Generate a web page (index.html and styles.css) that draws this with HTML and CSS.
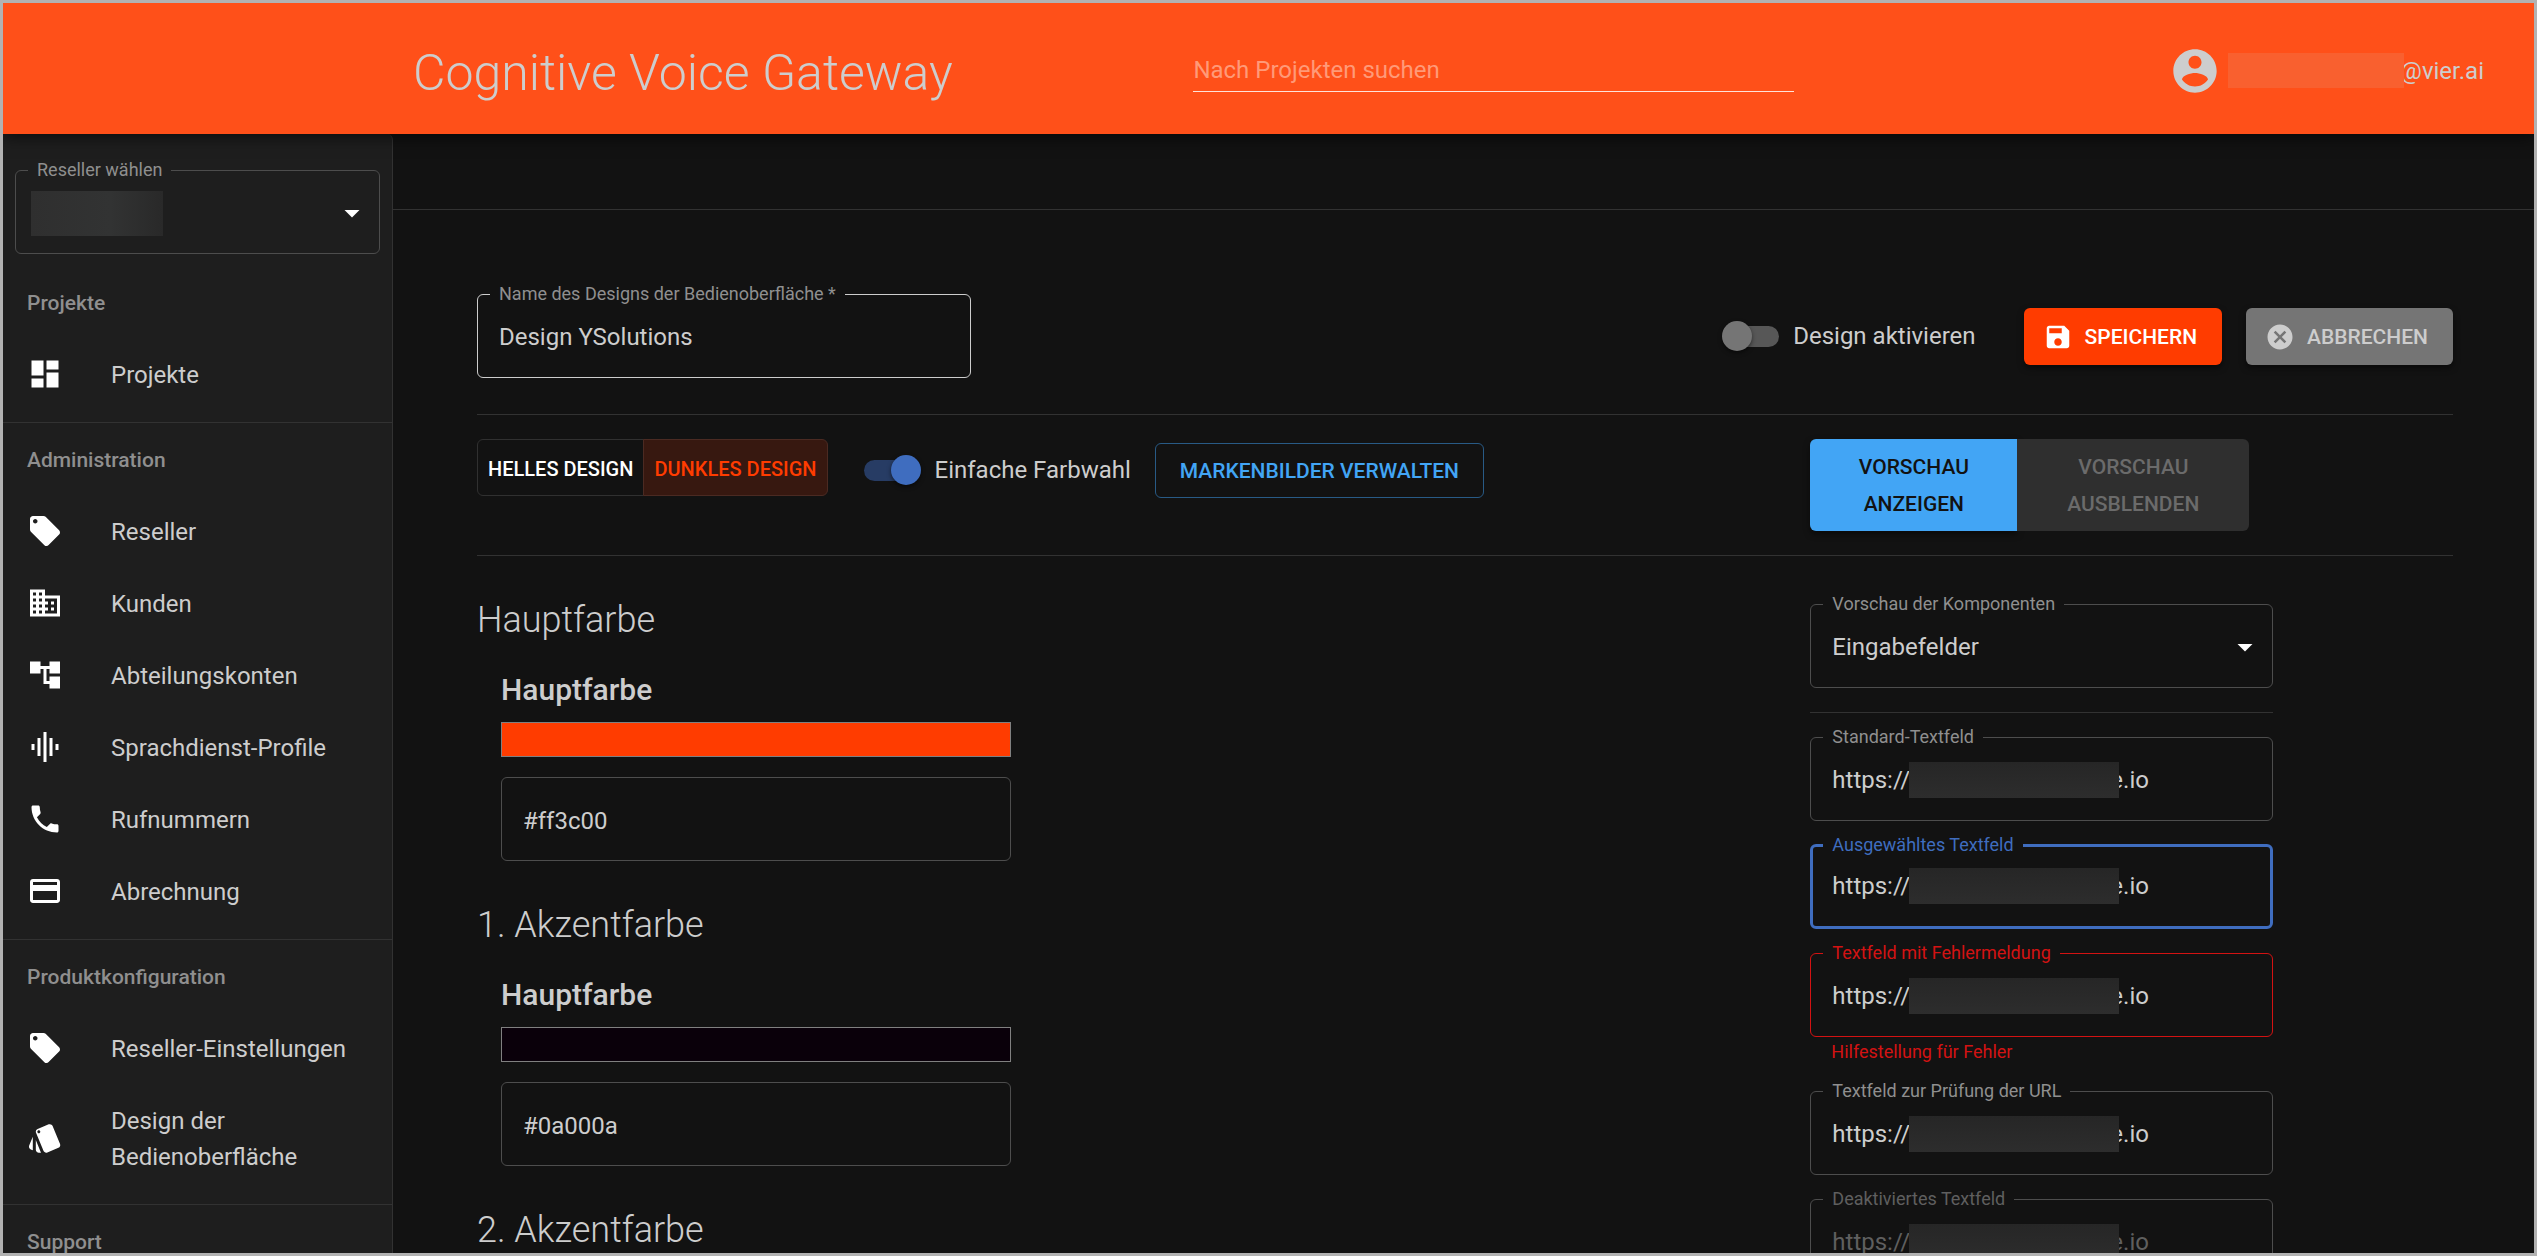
FILE: index.html
```html
<!DOCTYPE html>
<html lang="de">
<head>
<meta charset="utf-8">
<meta name="viewport" content="width=device-width, initial-scale=1">
<title>Cognitive Voice Gateway</title>
<link rel="stylesheet" href="styles.css">
</head>
<body>
<div class="app">
  <header class="topbar">
    <h1 class="topbar-title">Cognitive Voice Gateway</h1>
    <input class="search" type="search" placeholder="Nach Projekten suchen" aria-label="Nach Projekten suchen">
    <div class="user">
      <svg class="user-icon" viewBox="0 0 24 24"><path d="M12 2C6.48 2 2 6.48 2 12s4.48 10 10 10 10-4.48 10-10S17.52 2 12 2zm0 3c1.66 0 3 1.34 3 3s-1.34 3-3 3-3-1.34-3-3 1.34-3 3-3zm0 14.2c-2.500 0-4.710-1.280-6-3.220.03-1.990 4-3.080 6-3.080 1.990 0 5.970 1.090 6 3.080-1.290 1.940-3.500 3.220-6 3.220z"/></svg>
      <span class="redacted redacted-user"></span>
      <span class="user-domain">@vier.ai</span>
    </div>
  </header>

  <div class="body">
    <nav class="sidebar">
      <fieldset class="field field-reseller">
        <legend><label for="reseller">Reseller wählen</label></legend>
        <span class="redacted redacted-reseller"></span>
        <select id="reseller"><option></option></select>
        <svg class="icon" viewBox="0 0 24 24"><path d="M7 10l5 5 5-5z"/></svg>
      </fieldset>

      <section class="nav-section">
        <h2>Projekte</h2>
        <a href="#"><svg class="icon" viewBox="0 0 24 24"><path d="M3 13h8V3H3v10zm0 8h8v-6H3v6zm10 0h8V11h-8v10zm0-18v6h8V3h-8z"/></svg><span>Projekte</span></a>
      </section>
      <section class="nav-section">
        <h2>Administration</h2>
        <a href="#"><svg class="icon" viewBox="0 0 24 24"><path d="M21.410 11.580l-9-9C12.050 2.220 11.550 2 11 2H4c-1.100 0-2 .9-2 2v7c0 .55.22 1.050.59 1.420l9 9c.36.36.86.58 1.410.58.55 0 1.050-.22 1.410-.59l7-7c.37-.36.59-.86.59-1.410 0-.55-.23-1.060-.59-1.420zM5.500 7C4.670 7 4 6.330 4 5.500S4.670 4 5.500 4 7 4.670 7 5.500 6.330 7 5.500 7z"/></svg><span>Reseller</span></a>
        <a href="#"><svg class="icon" viewBox="0 0 24 24"><path d="M12 7V3H2v18h20V7H12zM6 19H4v-2h2v2zm0-4H4v-2h2v2zm0-4H4V9h2v2zm0-4H4V5h2v2zm4 12H8v-2h2v2zm0-4H8v-2h2v2zm0-4H8V9h2v2zm0-4H8V5h2v2zm10 12h-8v-2h2v-2h-2v-2h2v-2h-2V9h8v10zm-2-8h-2v2h2v-2zm0 4h-2v2h2v-2z"/></svg><span>Kunden</span></a>
        <a href="#"><svg class="icon" viewBox="0 0 24 24"><path d="M22 11V3h-7v3H9V3H2v8h7V8h2v10h4v3h7v-8h-7v3h-2V8h2v3z"/></svg><span>Abteilungskonten</span></a>
        <a href="#"><svg class="icon" viewBox="0 0 24 24"><path d="M7 18h2V6H7v12zm4 4h2V2h-2v20zm-8-8h2v-4H3v4zm12 4h2V6h-2v12zm4-8v4h2v-4h-2z"/></svg><span>Sprachdienst-Profile</span></a>
        <a href="#"><svg class="icon" viewBox="0 0 24 24"><path d="M6.620 10.790c1.440 2.830 3.760 5.140 6.590 6.590l2.200-2.200c.27-.27.67-.36 1.020-.24 1.120.37 2.330.57 3.570.57.55 0 1 .45 1 1V20c0 .55-.45 1-1 1-9.390 0-17-7.610-17-17 0-.55.45-1 1-1h3.500c.55 0 1 .45 1 1 0 1.250.2 2.450.57 3.570.11.35.03.74-.25 1.020l-2.200 2.200z"/></svg><span>Rufnummern</span></a>
        <a href="#"><svg class="icon" viewBox="0 0 24 24"><path d="M20 4H4c-1.110 0-1.990.89-1.990 2L2 18c0 1.110.89 2 2 2h16c1.110 0 2-.89 2-2V6c0-1.110-.89-2-2-2zm0 14H4v-6h16v6zm0-10H4V6h16v2z"/></svg><span>Abrechnung</span></a>
      </section>
      <section class="nav-section">
        <h2>Produktkonfiguration</h2>
        <a href="#"><svg class="icon" viewBox="0 0 24 24"><path d="M21.410 11.580l-9-9C12.050 2.220 11.550 2 11 2H4c-1.100 0-2 .9-2 2v7c0 .55.22 1.050.59 1.420l9 9c.36.36.86.58 1.410.58.55 0 1.050-.22 1.410-.59l7-7c.37-.36.59-.86.59-1.410 0-.55-.23-1.060-.59-1.420zM5.500 7C4.670 7 4 6.330 4 5.500S4.670 4 5.500 4 7 4.670 7 5.500 6.330 7 5.500 7z"/></svg><span>Reseller-Einstellungen</span></a>
        <a href="#"><svg class="icon" viewBox="0 0 24 24"><path d="M2.530 19.650l1.340.56v-9.030l-2.430 5.860c-.41 1.020.08 2.190 1.090 2.610zm19.500-3.700L17.070 3.980c-.31-.75-1.040-1.210-1.810-1.230-.26 0-.53.04-.79.15L7.100 5.950c-.75.31-1.210 1.030-1.230 1.800-.01.27.04.54.15.8l4.960 11.970c.31.76 1.050 1.220 1.830 1.230.26 0 .52-.05.77-.15l7.360-3.050c1.020-.42 1.510-1.590 1.090-2.600zM7.880 8.750c-.55 0-1-.45-1-1s.45-1 1-1 1 .45 1 1-.45 1-1 1zm-2 11c0 1.100.9 2 2 2h1.450l-3.450-8.340v6.340z"/></svg><span>Design der Bedienoberfläche</span></a>
      </section>
      <section class="nav-section">
        <h2>Support</h2>
      </section>
    </nav>

    <main class="main">
      <div class="crumb-strip"></div>
      <div class="content">
        <div class="row row-name">
          <fieldset class="field field-name">
            <legend><label for="design-name">Name des Designs der Bedienoberfläche *</label></legend>
            <input id="design-name" type="text" value="Design YSolutions">
          </fieldset>
          <div class="actions">
            <label class="switch-label switch-activate"><input class="switch" type="checkbox">Design aktivieren</label>
            <button class="btn btn-save" type="button"><svg viewBox="0 0 24 24"><path d="M17 3H5c-1.110 0-2 .9-2 2v14c0 1.100.89 2 2 2h14c1.100 0 2-.9 2-2V7l-4-4zm-5 16c-1.660 0-3-1.340-3-3s1.340-3 3-3 3 1.340 3 3-1.340 3-3 3zm3-10H5V5h10v4z"/></svg>SPEICHERN</button>
            <button class="btn btn-cancel" type="button"><svg viewBox="0 0 24 24"><path d="M12 2C6.470 2 2 6.470 2 12s4.470 10 10 10 10-4.470 10-10S17.530 2 12 2zm5 13.590L15.590 17 12 13.410 8.410 17 7 15.590 10.590 12 7 8.410 8.410 7 12 10.590 15.590 7 17 8.410 13.410 12 17 15.590z"/></svg>ABBRECHEN</button>
          </div>
        </div>

        <div class="row columns row-options">
          <div class="options">
            <div class="mode-toggle">
              <button type="button">HELLES DESIGN</button>
              <button class="active" type="button" aria-pressed="true">DUNKLES DESIGN</button>
            </div>
            <label class="switch-label"><input class="switch" type="checkbox" checked>Einfache Farbwahl</label>
            <button class="btn btn-outline" type="button">MARKENBILDER VERWALTEN</button>
          </div>
          <div class="preview-toggle">
            <button class="btn btn-show" type="button">VORSCHAU<br>ANZEIGEN</button>
            <button class="btn btn-hide" type="button" disabled>VORSCHAU<br>AUSBLENDEN</button>
          </div>
        </div>

        <div class="columns">
          <div class="colors">
            <section class="color-group">
              <h2>Hauptfarbe</h2>
              <div class="color">
                <h3><label for="c0">Hauptfarbe</label></h3>
                <div class="swatch" style="background:#ff3c00"></div>
                <div class="field plain"><input id="c0" type="text" value="#ff3c00"></div>
              </div>
            </section>
            <section class="color-group">
              <h2>1. Akzentfarbe</h2>
              <div class="color">
                <h3><label for="c1">Hauptfarbe</label></h3>
                <div class="swatch" style="background:#0a000a"></div>
                <div class="field plain"><input id="c1" type="text" value="#0a000a"></div>
              </div>
            </section>
            <section class="color-group">
              <h2>2. Akzentfarbe</h2>
            </section>
          </div>

          <div class="preview">
            <fieldset class="field">
              <legend><label for="component">Vorschau der Komponenten</label></legend>
              <select id="component"><option>Eingabefelder</option></select>
              <svg class="icon" viewBox="0 0 24 24"><path d="M7 10l5 5 5-5z"/></svg>
            </fieldset>
            <hr>
            <fieldset class="field">
              <legend><label for="f1">Standard-Textfeld</label></legend>
              <input id="f1" class="url" type="text" value="https://"><span class="redacted redacted-url"></span><span class="suffix">e.io</span>
            </fieldset>
            <fieldset class="field focused">
              <legend><label for="f2">Ausgewähltes Textfeld</label></legend>
              <input id="f2" class="url" type="text" value="https://"><span class="redacted redacted-url"></span><span class="suffix">e.io</span>
            </fieldset>
            <fieldset class="field error">
              <legend><label for="f3">Textfeld mit Fehlermeldung</label></legend>
              <input id="f3" class="url" type="text" value="https://" aria-describedby="f3-help"><span class="redacted redacted-url"></span><span class="suffix">e.io</span>
            </fieldset>
            <p id="f3-help" class="help">Hilfestellung für Fehler</p>
            <fieldset class="field">
              <legend><label for="f4">Textfeld zur Prüfung der URL</label></legend>
              <input id="f4" class="url" type="text" value="https://"><span class="redacted redacted-url"></span><span class="suffix">e.io</span>
            </fieldset>
            <fieldset class="field disabled" disabled>
              <legend><label for="f5">Deaktiviertes Textfeld</label></legend>
              <input id="f5" class="url" type="text" value="https://"><span class="redacted redacted-url"></span><span class="suffix">e.io</span>
            </fieldset>
          </div>
        </div>
      </div>
    </main>
  </div>
</div>
</body>
</html>
```
FILE: styles.css
```css
* { box-sizing: border-box; }

:root {
  --bg: #121212;
  --panel: #1e1e1e;
  --line: #323232;
  --text: #cdcdcd;
  --muted: #8f8f8f;
  --orange: #ff3c00;
  --blue: #3f6dbf;
  --sky: #42a5f5;
}

body {
  margin: 0;
  color: var(--text);
  background: var(--bg);
  font: 400 24px/36px Roboto, "Liberation Sans", sans-serif;
}

h1, h2, h3, p { margin: 0; font-weight: 400; }
a { color: inherit; text-decoration: none; }
button, input, select { font: inherit; color: inherit; }
svg { fill: currentColor; flex: none; }

.app {
  display: flex;
  flex-direction: column;
  height: 100vh;
  border: 3px solid #b2b2b2;
  overflow: hidden;
}

/* Top bar */
.topbar {
  display: grid;
  grid-template-columns: minmax(0, 26fr) minmax(0, 20fr) minmax(0, 23fr);
  align-items: center;
  flex: none;
  height: 131px;
  padding: 0 50px 0 410px;
  background: #ff5019;
  box-shadow: 0 3px 15px rgba(0, 0, 0, .6);
  position: relative;
  z-index: 1;
}
.topbar-title { font-size: 50px; line-height: 60px; font-weight: 300; padding-top: 8px; }
.search {
  width: 100%;
  height: 46px;
  padding: 4px 0 0;
  border: 0;
  border-bottom: 1px solid #ffe3da;
  border-radius: 0;
  background: none;
  outline: 0;
  appearance: none;
}
.search::placeholder { color: #ff9a78; opacity: 1; }
.user { display: flex; justify-content: flex-end; align-items: center; padding-top: 4px; }
.user-icon { width: 52px; height: 52px; margin-right: 7px; }

/* Blacked-out values */
.redacted { flex: none; background: #2a2a2a; position: relative; z-index: 1; }
.redacted-user { width: 176px; height: 35px; margin-right: -4px; background: #f9602f; }
.redacted-reseller { width: 132px; height: 45px; background: linear-gradient(90deg, #2f2f2f, #323333 60%, #292929); }
.redacted-url { width: 210px; height: 36px; margin-right: -9px; background: linear-gradient(#262626, #2d2d2d); }

/* Shell */
.body { display: flex; flex: 1; min-height: 0; }
.sidebar {
  flex: none;
  width: 390px;
  padding-top: 36px;
  background: var(--panel);
  border-right: 1px solid var(--line);
  border-top-right-radius: 6px;
  overflow: hidden;
}
.main { flex: 1; min-width: 0; overflow: hidden; }
.crumb-strip { height: 76px; border-bottom: 1px solid var(--line); }
.content { padding: 84px 81px 0 84px; }
.icon { width: 36px; height: 36px; color: #fff; }

/* Navigation */
.nav-section { padding-bottom: 12px; border-bottom: 1px solid var(--line); }
.nav-section h2 {
  padding: 2px 24px 0;
  font-size: 21px;
  line-height: 70px;
  font-weight: 500;
  color: var(--muted);
}
.nav-section a { display: flex; align-items: center; gap: 48px; padding: 17px 24px; }
.nav-section span { padding-top: 2px; }

/* Outlined fields: the border runs through the middle of the 18px legend */
.field {
  display: flex;
  align-items: center;
  min-width: 0;
  height: 93px;
  margin: -9px 0 0;
  padding: 3px 9px 9px 12px;
  border: 1px solid #4d4d4d;
  border-radius: 6px;
}
.field legend { padding: 0 9px; font-size: 18px; line-height: 18px; color: var(--muted); }
.field legend + * { margin-left: 9px; }
.field legend + .redacted-reseller { margin-left: 3px; }
.field.plain { height: 84px; margin: 0; padding: 3px 21px 0; }
.field input, .field select {
  flex: 1;
  min-width: 0;
  height: 48px;
  padding: 0;
  border: 0;
  background: none;
  outline: 0;
  appearance: none;
}
.field option { background: var(--panel); }
.field .url { flex: none; width: 77px; }
.field-name { width: 25%; border-color: #cdcdcd; }
.field.field-reseller { margin: -9px 12px 12px; }
.field.focused { padding: 1px 7px 9px 10px; border: 3px solid var(--blue); }
.focused legend { color: var(--blue); }
.field.error { border-color: #d31212; }
.error legend, .help { color: #d31212; }
.help { padding-left: 21px; font-size: 18px; line-height: 30px; }
.field.disabled, .disabled legend { color: #5f5f5f; }

/* Rows */
.row { border-bottom: 1px solid var(--line); }
.row-name { display: flex; justify-content: space-between; align-items: center; padding-bottom: 36px; }
.columns { display: grid; grid-template-columns: minmax(0, 2fr) minmax(0, 1fr); column-gap: 48px; }
.row-options { padding: 24px 0; }
.actions { display: flex; align-items: center; gap: 24px; }
.options { display: flex; align-items: center; align-self: start; gap: 24px; height: 62px; }

/* Buttons */
.btn {
  display: inline-flex;
  align-items: center;
  justify-content: center;
  gap: 12px;
  padding: 11px 25px 9px 19px;
  border: 0;
  border-radius: 6px;
  font-size: 21px;
  line-height: 37px;
  font-weight: 500;
  white-space: nowrap;
}
.btn svg { width: 30px; height: 30px; }
.btn-save { color: #fff; background: var(--orange); box-shadow: 0 3px 6px rgba(0, 0, 0, .5); }
.btn-cancel { color: #cdcdcd; background: #757575; box-shadow: 0 3px 6px rgba(0, 0, 0, .5); }
.btn-outline { padding: 9px 24px 7px; border: 1px solid #285a85; color: var(--sky); background: none; }

.mode-toggle { display: flex; align-self: start; }
.mode-toggle button {
  height: 57px;
  padding: 3px 10px 0;
  border: 1px solid #303030;
  border-radius: 6px 0 0 6px;
  background: none;
  color: #fff;
  font-size: 20px;
  font-weight: 500;
  white-space: nowrap;
}
.mode-toggle .active { border-color: #4b2a22; border-radius: 0 6px 6px 0; margin-left: -1px; background: #371810; color: var(--orange); }

.preview-toggle { display: grid; grid-template-columns: 207px 232px; }
.preview-toggle .btn { padding: 10px 0 8px; }
.preview-toggle .btn-show { border-radius: 6px 0 0 6px; color: #121212; background: var(--sky); box-shadow: 0 3px 6px rgba(0, 0, 0, .5); }
.preview-toggle .btn-hide { border-radius: 0 6px 6px 0; color: #6b6b6b; background: #2f2f2f; }

/* Switches */
.switch-label { display: flex; align-items: center; gap: 14px; white-space: nowrap; }
.options .switch-label { padding-left: 12px; }
.switch-activate { margin-right: 24px; }
.switch { position: relative; flex: none; width: 57px; height: 30px; margin: 0; appearance: none; }
.switch::before, .switch::after { content: ""; position: absolute; }
.switch::before { left: 3px; top: 5px; width: 54px; height: 21px; border-radius: 11px; background: #575757; }
.switch::after { left: 0; top: 0; width: 30px; height: 30px; border-radius: 50%; background: #757575; box-shadow: 0 2px 4px rgba(0, 0, 0, .5); }
.switch:checked::before { left: 0; background: #273c64; }
.switch:checked::after { left: 27px; background: var(--blue); }

/* Colour list */
.colors { padding-top: 38px; }
.color-group { padding-bottom: 38px; }
.color-group h2 { padding-top: 4px; font-size: 36px; line-height: 44px; font-weight: 300; }
.color { max-width: 534px; padding: 23px 0 0 24px; }
.color h3 { padding-top: 2px; font-size: 30px; line-height: 46px; font-weight: 500; }
.swatch { height: 35px; margin: 9px 0 20px; border: 1px solid #808080; }

/* Component preview: 24px between outlines, less the 9px each legend rises above */
.preview { width: 72%; padding-top: 39px; }
.preview .field { margin: 15px 0 0; }
.preview .field:first-child { margin-top: 0; }
.preview hr { margin: 24px 0 0; border: 0; border-top: 1px solid var(--line); }
```
